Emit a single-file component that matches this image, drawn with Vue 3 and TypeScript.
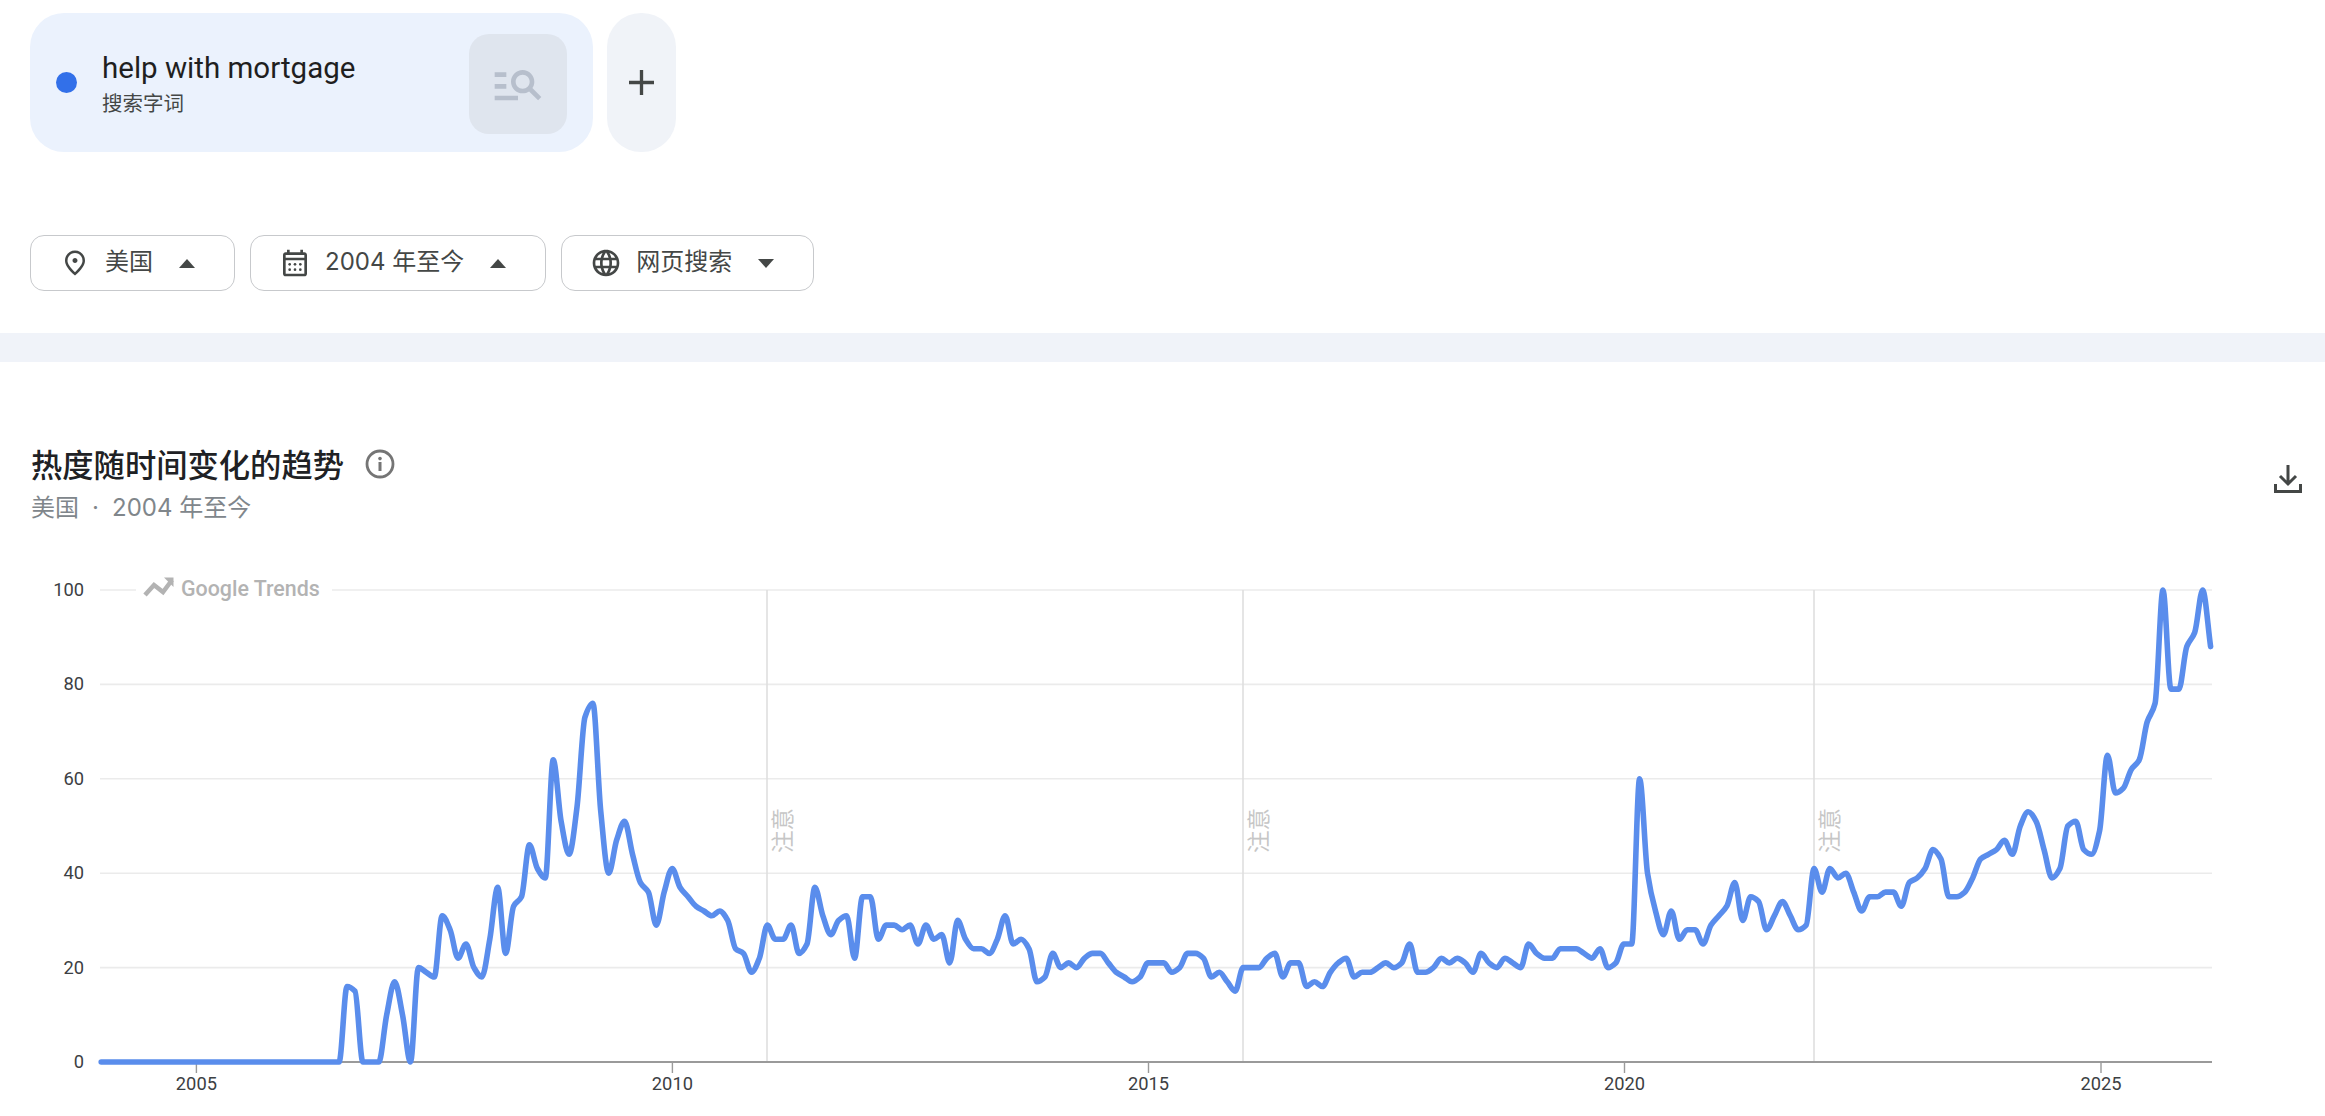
<script setup lang="ts">
import { computed } from "vue";

// monthly interest values, Jan 2004 to Mar 2026
const zeros = new Array(31).fill(0) as number[];
const values: number[] = [
  ...zeros,
  16, 15, 0, 0, 0, 10, 17, 10, 0, 20, 19, 18, 31, 28, 22, 25, 20, 18, 26, 37, 23, 33, 35, 46, 41, 39, 64, 51, 44, 54,
  73, 76, 53, 40, 47, 51, 44, 38, 36, 29, 36, 41, 37, 35, 33, 32, 31, 32, 30, 24, 23, 19, 22, 29,
  26, 26, 29, 23, 25, 37, 31, 27, 30, 31, 22, 35, 35, 26, 29, 29, 28, 29, 25, 29, 26, 27, 21, 30, 26, 24, 24, 23, 26, 31,
  25, 26, 24, 17, 18, 23, 20, 21, 20, 22, 23, 23, 21, 19, 18, 17, 18, 21, 21, 21, 19, 20, 23, 23, 22, 18, 19, 17, 15, 20,
  20, 20, 22, 23, 18, 21, 21, 16, 17, 16, 19, 21, 22, 18, 19, 19, 20, 21, 20, 21, 25, 19, 19, 20, 22, 21, 22, 21, 19, 23,
  21, 20, 22, 21, 20, 25, 23, 22, 22, 24, 24, 24, 23, 22, 24, 20, 21, 25, 25, 60, 40, 32, 27, 32, 26, 28, 28, 25, 29, 31,
  33, 38, 30, 35, 34, 28, 31, 34, 31, 28, 29, 41, 36, 41, 39, 40, 36, 32, 35, 35, 36, 36, 33, 38, 39, 41, 45, 43, 35, 35,
  36, 39, 43, 44, 45, 47, 44, 50, 53, 51, 45, 39, 41, 50, 51, 45, 44, 49, 65, 57, 58, 62, 64, 72, 76, 100, 79, 79, 88, 91,
  100, 88,
];

const chartLeft = 101.2;
const monthWidth = 7.93;
const chartRight = 2212;
const zeroY = 502;
const unitY = 4.72;

const toX = (i: number) => chartLeft + i * monthWidth;
const toY = (v: number) => zeroY - v * unitY;

const gridLines = [80, 60, 40, 20].map((v) => ({ value: v, y: toY(v) }));
const yearTicks = [
  { label: "2005", x: 196.4 },
  { label: "2010", x: 672.4 },
  { label: "2015", x: 1148.5 },
  { label: "2020", x: 1624.5 },
  { label: "2025", x: 2101 },
];
const notes = [767, 1243, 1814];

// same idea as d3's curveMonotoneX so the line does not overshoot
const linePath = computed(() => {
  const pts = values.map((v, i) => [toX(i), toY(v)]);
  const n = pts.length;
  const slopes: number[] = [];
  for (let i = 0; i < n - 1; i++) {
    slopes.push((pts[i + 1][1] - pts[i][1]) / (pts[i + 1][0] - pts[i][0]));
  }
  const tangents: number[] = [slopes[0]];
  for (let i = 1; i < n - 1; i++) {
    const a = slopes[i - 1];
    const b = slopes[i];
    tangents.push(a * b <= 0 ? 0 : (2 * a * b) / (a + b));
  }
  tangents.push(slopes[n - 2]);
  let d = `M${pts[0][0].toFixed(1)} ${pts[0][1].toFixed(1)}`;
  for (let i = 0; i < n - 1; i++) {
    const h = (pts[i + 1][0] - pts[i][0]) / 3;
    const c1x = pts[i][0] + h;
    const c1y = pts[i][1] + tangents[i] * h;
    const c2x = pts[i + 1][0] - h;
    const c2y = pts[i + 1][1] - tangents[i + 1] * h;
    d += `C${c1x.toFixed(1)} ${c1y.toFixed(1)} ${c2x.toFixed(1)} ${c2y.toFixed(1)} ${pts[i + 1][0].toFixed(1)} ${pts[i + 1][1].toFixed(1)}`;
  }
  return d;
});
</script>

<template>
  <div class="page">
    <section class="terms">
      <div class="term-chip">
        <span class="term-dot"></span>
        <div class="term-text">
          <div class="term-name">help with mortgage</div>
          <div class="term-kind">搜索字词</div>
        </div>
        <div class="term-tile">
          <svg viewBox="0 0 24 24" width="56" height="56" fill="#b7bfcc">
            <path d="M7 9H2V7h5v2zm0 3H2v2h5v-2zm13.59 7-3.83-3.83c-.8.52-1.74.83-2.76.83-2.76 0-5-2.24-5-5s2.24-5 5-5 5 2.24 5 5c0 1.02-.31 1.96-.83 2.75L22 17.59 20.59 19zM17 11c0-1.65-1.35-3-3-3s-3 1.35-3 3 1.35 3 3 3 3-1.35 3-3zM2 19h10v-2H2v2z" />
          </svg>
        </div>
      </div>
      <div class="add-term">
        <svg viewBox="0 0 24 24" width="25" height="25" fill="none" stroke="#444746" stroke-width="3.2">
          <path d="M12 0v24M0 12h24" />
        </svg>
      </div>
    </section>

    <section class="filters">
      <div class="filter">
        <span class="filter-icon">
          <svg viewBox="0 0 24 24" width="30" height="30" fill="#444746">
            <path d="M12 12c-1.1 0-2-.9-2-2s.9-2 2-2 2 .9 2 2-.9 2-2 2zm6-1.8C18 6.57 15.35 4 12 4s-6 2.57-6 6.2c0 2.34 1.95 5.44 6 9.14 4.05-3.7 6-6.8 6-9.14zM12 2c4.2 0 8 3.22 8 8.2 0 3.32-2.67 7.25-8 11.8-5.33-4.55-8-8.48-8-11.8C4 5.22 7.8 2 12 2z" />
          </svg>
        </span>
        <span class="filter-label">美国</span>
        <span class="caret up"></span>
      </div>
      <div class="filter">
        <span class="filter-icon">
          <svg viewBox="0 0 24 24" width="32" height="32" fill="#444746">
            <path d="M5 22c-1.1 0-2-.9-2-2V6c0-1.1.9-2 2-2h1V2h2v2h8V2h2v2h1c1.1 0 2 .9 2 2v14c0 1.1-.9 2-2 2H5zm0-2h14V10H5v10zM5 8h14V6H5v2z" />
            <circle cx="8" cy="13" r="1" /><circle cx="12" cy="13" r="1" /><circle cx="16" cy="13" r="1" />
            <circle cx="8" cy="17" r="1" /><circle cx="12" cy="17" r="1" /><circle cx="16" cy="17" r="1" />
          </svg>
        </span>
        <span class="filter-label">2004 年至今</span>
        <span class="caret up"></span>
      </div>
      <div class="filter">
        <span class="filter-icon">
          <svg viewBox="0 0 24 24" width="32" height="32" fill="#444746">
            <path d="M11.99 2C6.47 2 2 6.48 2 12s4.47 10 9.99 10C17.52 22 22 17.52 22 12S17.52 2 11.99 2zm6.93 6h-2.95c-.32-1.25-.78-2.45-1.38-3.56 1.84.63 3.37 1.91 4.33 3.56zM12 4.04c.83 1.2 1.48 2.53 1.91 3.96h-3.82c.43-1.43 1.08-2.76 1.91-3.96zM4.26 14C4.1 13.36 4 12.69 4 12s.1-1.36.26-2h3.38c-.08.66-.14 1.32-.14 2s.06 1.34.14 2H4.26zm.82 2h2.95c.32 1.25.78 2.45 1.38 3.56-1.84-.63-3.37-1.9-4.33-3.56zm2.95-8H5.08c.96-1.66 2.49-2.93 4.33-3.56C8.81 5.55 8.35 6.75 8.03 8zM12 19.96c-.83-1.2-1.48-2.53-1.91-3.96h3.82c-.43 1.43-1.08 2.76-1.91 3.96zM14.34 14H9.66c-.09-.66-.16-1.32-.16-2s.07-1.35.16-2h4.68c.09.65.16 1.32.16 2s-.07 1.34-.16 2zm.25 5.56c.6-1.11 1.06-2.31 1.38-3.56h2.95c-.96 1.65-2.49 2.93-4.33 3.56zM16.36 14c.08-.66.14-1.32.14-2s-.06-1.34-.14-2h3.38c.16.64.26 1.31.26 2s-.1 1.36-.26 2h-3.38z" />
          </svg>
        </span>
        <span class="filter-label">网页搜索</span>
        <span class="caret down"></span>
      </div>
    </section>

    <div class="band"></div>

    <section class="panel">
      <header class="panel-head">
        <div>
          <div class="panel-title">
            <span>热度随时间变化的趋势</span>
            <svg viewBox="0 0 30 30" width="30" height="30">
              <circle cx="15" cy="15" r="13" fill="none" stroke="#757575" stroke-width="2.8" />
              <circle cx="15" cy="9.6" r="1.8" fill="#757575" />
              <rect x="13.5" y="13" width="3" height="9" fill="#757575" />
            </svg>
          </div>
          <div class="panel-sub">美国<span class="sep">·</span>2004 年至今</div>
        </div>
        <svg class="download" viewBox="0 0 28 28" width="28" height="28" fill="none" stroke="#444746" stroke-width="3">
          <path d="M14 0v19M6 11l8 8 8-8M1.500 19v7.500h25V19" />
        </svg>
      </header>

      <svg class="chart" viewBox="0 0 2325 556" width="2325" height="556">
        <!-- top grid line is split by the watermark -->
        <path d="M100 30H136M332 30H2212" stroke="#ebebeb" stroke-width="1.6" />
        <line v-for="g in gridLines" :key="g.value" x1="100" x2="2212" :y1="g.y" :y2="g.y" stroke="#ebebeb" stroke-width="1.6" />

        <g v-for="x in notes" :key="x">
          <line :x1="x" :x2="x" y1="30" :y2="zeroY" stroke="#dfdfdf" stroke-width="1.6" />
          <text class="note" :transform="`translate(${x + 24} 293) rotate(-90)`">注意</text>
        </g>

        <text class="tick" x="84" y="36" text-anchor="end">100</text>
        <text v-for="g in gridLines" :key="'t' + g.value" class="tick" x="84" :y="g.y + 6" text-anchor="end">{{ g.value }}</text>
        <text class="tick" x="84" :y="zeroY + 6" text-anchor="end">0</text>

        <path d="M145 35l9-10 9 7 9-12" fill="none" stroke="#b3b3b3" stroke-width="4.500" />
        <path d="M164 17.500h9.500v9.500z" fill="#b3b3b3" />
        <text class="logo-text" x="181" y="36">Google Trends</text>

        <line x1="100" :x2="chartRight" :y1="zeroY" :y2="zeroY" stroke="#9a9a9a" stroke-width="2" />
        <g v-for="t in yearTicks" :key="t.label">
          <line :x1="t.x" :x2="t.x" :y1="zeroY" :y2="zeroY + 11" stroke="#9a9a9a" stroke-width="1.4" />
          <text class="tick" :x="t.x" y="530" text-anchor="middle">{{ t.label }}</text>
        </g>

        <path :d="linePath" fill="none" stroke="#5a8dec" stroke-width="5.600" stroke-linecap="round" stroke-linejoin="round" />
      </svg>
    </section>
  </div>
</template>

<style scoped>
.page {
  width: 2325px;
  height: 1116px;
  overflow: hidden;
  background: #fff;
  font-family: Roboto, "Noto Sans CJK SC", sans-serif;
  color: #1f1f1f;
}

.terms {
  display: flex;
  gap: 14px;
  padding: 13px 0 0 30px;
}

.term-chip {
  display: flex;
  align-items: center;
  width: 563px;
  height: 139px;
  box-sizing: border-box;
  padding: 0 26px 0 26px;
  background: #ebf2fd;
  border-radius: 34px;
}

.term-dot {
  width: 21px;
  height: 21px;
  border-radius: 50%;
  background: #3270e9;
  flex-shrink: 0;
}

.term-text {
  margin-left: 25px;
  flex: 1;
}

.term-name {
  font-size: 29.500px;
  line-height: 38px;
}

.term-kind {
  font-family: "Noto Sans CJK SC", sans-serif;
  font-size: 20.500px;
  line-height: 30px;
  color: #444746;
}

.term-tile {
  display: flex;
  align-items: center;
  justify-content: center;
  width: 98px;
  height: 100px;
  margin-top: 3px;
  border-radius: 20px;
  background: #dfe5ee;
}

.add-term {
  display: flex;
  align-items: center;
  justify-content: center;
  width: 69px;
  height: 139px;
  border-radius: 34px;
  background: #f0f3f8;
}

.filters {
  display: flex;
  gap: 15px;
  margin-top: 83px;
  padding-left: 30px;
}

.filter {
  display: flex;
  align-items: center;
  height: 56px;
  box-sizing: border-box;
  padding: 0 39px 0 30px;
  background: #fff;
  border: 1.500px solid #c7c9cc;
  border-radius: 14px;
}

.filter-icon {
  display: flex;
  align-items: center;
  justify-content: center;
  width: 28px;
  height: 32px;
  margin-right: 16px;
}

.filter-icon svg {
  flex-shrink: 0;
}

.filter-label {
  font-family: Inter, "Noto Sans CJK SC", sans-serif;
  font-size: 24px;
  line-height: 32px;
  margin-top: -2px;
  color: #444746;
  margin-right: 26px;
}

.caret {
  width: 0;
  height: 0;
  border-left: 8px solid transparent;
  border-right: 8px solid transparent;
}

.caret.up {
  border-bottom: 9px solid #444746;
}

.caret.down {
  border-top: 9px solid #444746;
}

.band {
  height: 29px;
  margin-top: 42px;
  background: #f0f3f9;
}

.panel-head {
  display: flex;
  justify-content: space-between;
  align-items: flex-start;
  padding: 82px 23px 0 31px;
}

.panel-title {
  display: flex;
  align-items: center;
  gap: 21px;
  height: 40px;
  font-family: "Noto Sans CJK SC", sans-serif;
  font-size: 31.300px;
  font-weight: 500;
  line-height: 40px;
  color: #202124;
}

.panel-sub {
  margin-top: 8px;
  font-family: Inter, "Noto Sans CJK SC", sans-serif;
  font-size: 24px;
  line-height: 32px;
  color: #80868b;
}

.sep {
  display: inline-block;
  width: 33px;
  text-align: center;
}

.download {
  margin-top: 21px;
}

.chart {
  display: block;
  margin-top: 36px;
}

.tick {
  font-family: Roboto, sans-serif;
  font-size: 18.300px;
  fill: #3c4043;
}

.note {
  font-family: "Noto Sans CJK SC", sans-serif;
  font-size: 22.500px;
  fill: #c6c6c6;
}

.logo-text {
  font-family: Roboto, sans-serif;
  font-size: 21.400px;
  font-weight: 500;
  fill: #b3b3b3;
}
</style>

<style>
html,
body {
  margin: 0;
  background: #fff;
}
</style>
